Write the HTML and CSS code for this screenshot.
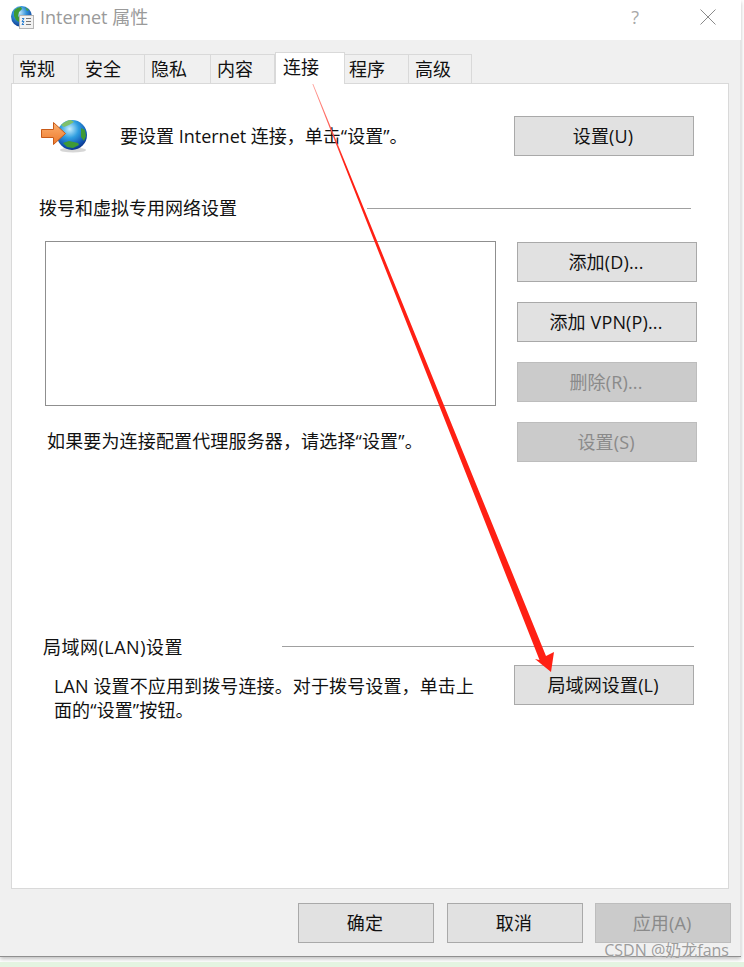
FILE: index.html
```html
<!DOCTYPE html>
<html lang="zh-CN">
<head>
<meta charset="utf-8">
<title>Internet 属性</title>
<link rel="stylesheet" href="styles.css">
</head>
<body>
<div class="window">
  <header class="titlebar">
    <svg class="app-icon" width="26" height="26" viewBox="0 0 26 26">
      <defs>
        <radialGradient id="g1" cx="0.42" cy="0.32" r="0.72">
          <stop offset="0" stop-color="#bfe6fa"/><stop offset="0.45" stop-color="#2f8fd8"/><stop offset="1" stop-color="#0c2f86"/>
        </radialGradient>
      </defs>
      <circle cx="11.5" cy="11.500" r="10.5" fill="url(#g1)"/>
      <path d="M4 6c2-3 5-4 7-4l1 2-3 3-1 4 2 3-1 3-3-2-2-4z" fill="#3f9a35"/>
      <path d="M15 2l4 3-2 1zM17 12l4-1-1 3-3 1z" fill="#4ba33a"/>
      <rect x="9.500" y="10.500" width="14" height="13" fill="#f2f2f2" stroke="#b5b5b5"/>
      <path d="M16 13.500h5M16 16.500h5M16 19.500h5" stroke="#777"/>
      <path d="M12 13.500h2l-2 3h2l-2 3h2" stroke="#2a7fd0" fill="none"/>
    </svg>
    <span class="title">Internet 属性</span>
    <span class="help">?</span>
    <svg class="close" width="16" height="16" viewBox="0 0 16 16"><path d="M0.5 0.5l15 15M15.500 0.5l-15 15" stroke="#8a8a8a" stroke-width="1" fill="none"/></svg>
  </header>

  <main class="client">
    <nav class="tabs">
      <span class="tab">常规</span>
      <span class="tab">安全</span>
      <span class="tab">隐私</span>
      <span class="tab">内容</span>
      <span class="tab active">连接</span>
      <span class="tab">程序</span>
      <span class="tab">高级</span>
    </nav>

    <section class="panel">
      <div class="setup-row">
        <svg class="net-icon" width="46" height="34" viewBox="0 0 46 34">
          <defs>
            <radialGradient id="g2" cx="0.42" cy="0.3" r="0.75">
              <stop offset="0" stop-color="#c8eefc"/><stop offset="0.4" stop-color="#2f9ee0"/><stop offset="0.8" stop-color="#0f4fae"/><stop offset="1" stop-color="#0a2a78"/>
            </radialGradient>
            <linearGradient id="g3" x1="0" y1="0" x2="0" y2="1">
              <stop offset="0" stop-color="#fbb070"/><stop offset="1" stop-color="#ee7a2c"/>
            </linearGradient>
          </defs>
          <ellipse cx="32" cy="31" rx="13" ry="2.5" fill="#bbb" opacity="0.6"/>
          <circle cx="31" cy="16" r="15" fill="url(#g2)"/>
          <path d="M20 6c3-3 7-5 10-5l3 2-5 3-5 2z" fill="#7fc06a"/>
          <path d="M40 9l4 2 1 6-2 5-3-4z" fill="#3f9a35"/>
          <path d="M22 24l6-2 9 2 1 2-6 3-6-1z" fill="#3f9a35"/>
          <path d="M0.5 10.500h12v-7l12 11-12 11v-7h-12z" fill="url(#g3)" stroke="#c85a18" stroke-width="1"/>
        </svg>
        <p class="setup-text">要设置 Internet 连接，单击“设置”。</p>
        <button class="btn" type="button">设置(U)</button>
      </div>

      <div class="group-head dial-head">
        <span>拨号和虚拟专用网络设置</span>
        <i class="rule"></i>
      </div>

      <div class="dial-row">
        <div class="dial-left">
          <div class="listbox"></div>
          <p class="proxy-text">如果要为连接配置代理服务器，请选择“设置”。</p>
        </div>
        <div class="dial-buttons">
          <button class="btn" type="button">添加(D)...</button>
          <button class="btn" type="button">添加 VPN(P)...</button>
          <button class="btn disabled" type="button">删除(R)...</button>
          <button class="btn disabled" type="button">设置(S)</button>
        </div>
      </div>

      <div class="group-head lan-head">
        <span>局域网(LAN)设置</span>
        <i class="rule"></i>
      </div>

      <div class="lan-row">
        <p class="lan-text">LAN 设置不应用到拨号连接。对于拨号设置，单击上<br>面的“设置”按钮。</p>
        <button class="btn" type="button">局域网设置(L)</button>
      </div>
    </section>

    <footer class="actions">
      <button class="btn wide" type="button">确定</button>
      <button class="btn wide" type="button">取消</button>
      <button class="btn wide disabled" type="button">应用(A)</button>
    </footer>
  </main>

  <span class="watermark">CSDN @奶龙fans</span>
</div>
<div class="page-strip"></div>

<svg class="annotation" width="744" height="967" viewBox="0 0 744 967">
  <defs>
    <linearGradient id="fade" gradientUnits="userSpaceOnUse" x1="310" y1="77" x2="345" y2="165">
      <stop offset="0" stop-color="#ffaea8"/><stop offset="1" stop-color="#ff2014"/>
    </linearGradient>
  </defs>
  <path d="M309.600 77L310.400 77L546 656L554 652L551 672L535 659L539.500 660z" fill="url(#fade)"/>
</svg>
</body>
</html>
```

FILE: styles.css
```css
* { box-sizing: border-box; }
html, body { margin: 0; padding: 0; background: #fff; }
body {
  position: relative;
  width: 744px;
  height: 967px;
  overflow: hidden;
  font-family: "Open Sans", "Noto Sans CJK SC", sans-serif;
  font-size: 18px;
  line-height: 24px;
  color: #111;
}
p { margin: 0; }

.window {
  position: relative;
  width: 741px;
  height: 957px;
  border-bottom: 1px solid #8f8f8f;
  box-shadow: 0 2px 4px rgba(0,0,0,.25);
  display: flex;
  flex-direction: column;
}
.page-strip {
  position: absolute;
  left: 0;
  right: 0;
  bottom: 0;
  height: 5px;
  background: #e4f4e1;
}

.titlebar {
  height: 40px;
  flex: none;
  background: #fff;
  display: flex;
  align-items: center;
  padding: 0 0 6px 10px;
}
.app-icon { margin-right: 4px; margin-top: 1px; }
.title { color: #9a9a9a; font-size: 18px; }
.help { margin-left: auto; color: #a8a8a8; font-size: 18px; margin-right: 61px; }
.close { margin-right: 25px; }

.client {
  flex: 1;
  background: #f0f0f0;
  border-right: 1px solid #e4e4e4;
  padding: 14px 11px 0 11px;
  display: flex;
  flex-direction: column;
}

.tabs {
  display: flex;
  height: 29px;
  padding-left: 2px;
  align-items: flex-end;
  position: relative;
  z-index: 1;
}
.tab {
  width: 66px;
  height: 29px;
  padding-left: 6px;
  line-height: 29px;
  border: 1px solid #d9d9d9;
  border-left-width: 0;
  border-bottom: 0;
  background: #f0f0f0;
}
.tab:first-child { border-left-width: 1px; padding-left: 5px; }
.tab:nth-child(4) { width: 64px; }
.tab.active {
  width: 70px;
  height: 32px;
  margin-bottom: -1px;
  line-height: 28px;
  padding-left: 7px;
  background: #fff;
  border-left-width: 1px;
}
.tab:nth-child(6) { width: 64px; padding-left: 4px; }
.tab:last-child { width: 63px; }

.panel {
  height: 806px;
  flex: none;
  background: #fff;
  border: 1px solid #d9d9d9;
  padding-top: 32px;
}

.btn {
  display: block;
  width: 180px;
  height: 40px;
  padding: 0 2px 0 0;
  font: inherit;
  letter-spacing: 0.15px;
  color: #111;
  background: #e1e1e1;
  border: 1px solid #a9a9a9;
  flex: none;
}
.btn.wide { width: 136px; }
.btn.disabled { background: #cbcbcb; border-color: #bdbdbd; color: #8a8a8a; }

.setup-row {
  display: flex;
  align-items: center;
  height: 40px;
  padding: 0 34px 0 29px;
}
.net-icon { flex: none; margin-right: 33px; }
.setup-text { flex: 1; }

.group-head {
  display: flex;
  align-items: center;
  height: 24px;
}
.rule { display: block; flex: 1; height: 1px; background: #a0a0a0; }
.dial-head { margin-top: 40px; padding: 0 37px 0 27px; }
.dial-head .rule { margin-left: 130px; }
.lan-head { margin-top: 173px; padding: 0 34px 0 31px; letter-spacing: 0.5px; }
.lan-head .rule { margin-left: 99px; margin-top: -2px; }

.dial-row {
  display: flex;
  margin-top: 21px;
  padding-left: 33px;
}
.dial-left { width: 451px; margin-right: 21px; }
.listbox { height: 165px; border: 1px solid #8f8f8f; background: #fff; }
.proxy-text { margin: 23px 0 0 2px; letter-spacing: 0.15px; white-space: nowrap; }
.dial-buttons {
  display: flex;
  flex-direction: column;
  gap: 20px;
  margin-top: 1px;
}

.lan-row {
  display: flex;
  justify-content: space-between;
  margin-top: 6px;
  padding: 0 34px 0 42px;
}
.lan-text { padding-top: 9px; letter-spacing: 0.12px; }

.actions {
  display: flex;
  justify-content: flex-end;
  gap: 13px;
  padding-top: 14px;
  margin-right: -2px;
}
.actions .btn:last-child { margin-left: -1px; }

.watermark {
  position: absolute;
  right: 12px;
  bottom: -4px;
  font-size: 16px;
  line-height: 20px;
  color: #9c9c9c;
  text-shadow: 0 0 2px #f4f4f4;
}

.annotation {
  position: absolute;
  left: 0;
  top: 0;
  pointer-events: none;
}
```
